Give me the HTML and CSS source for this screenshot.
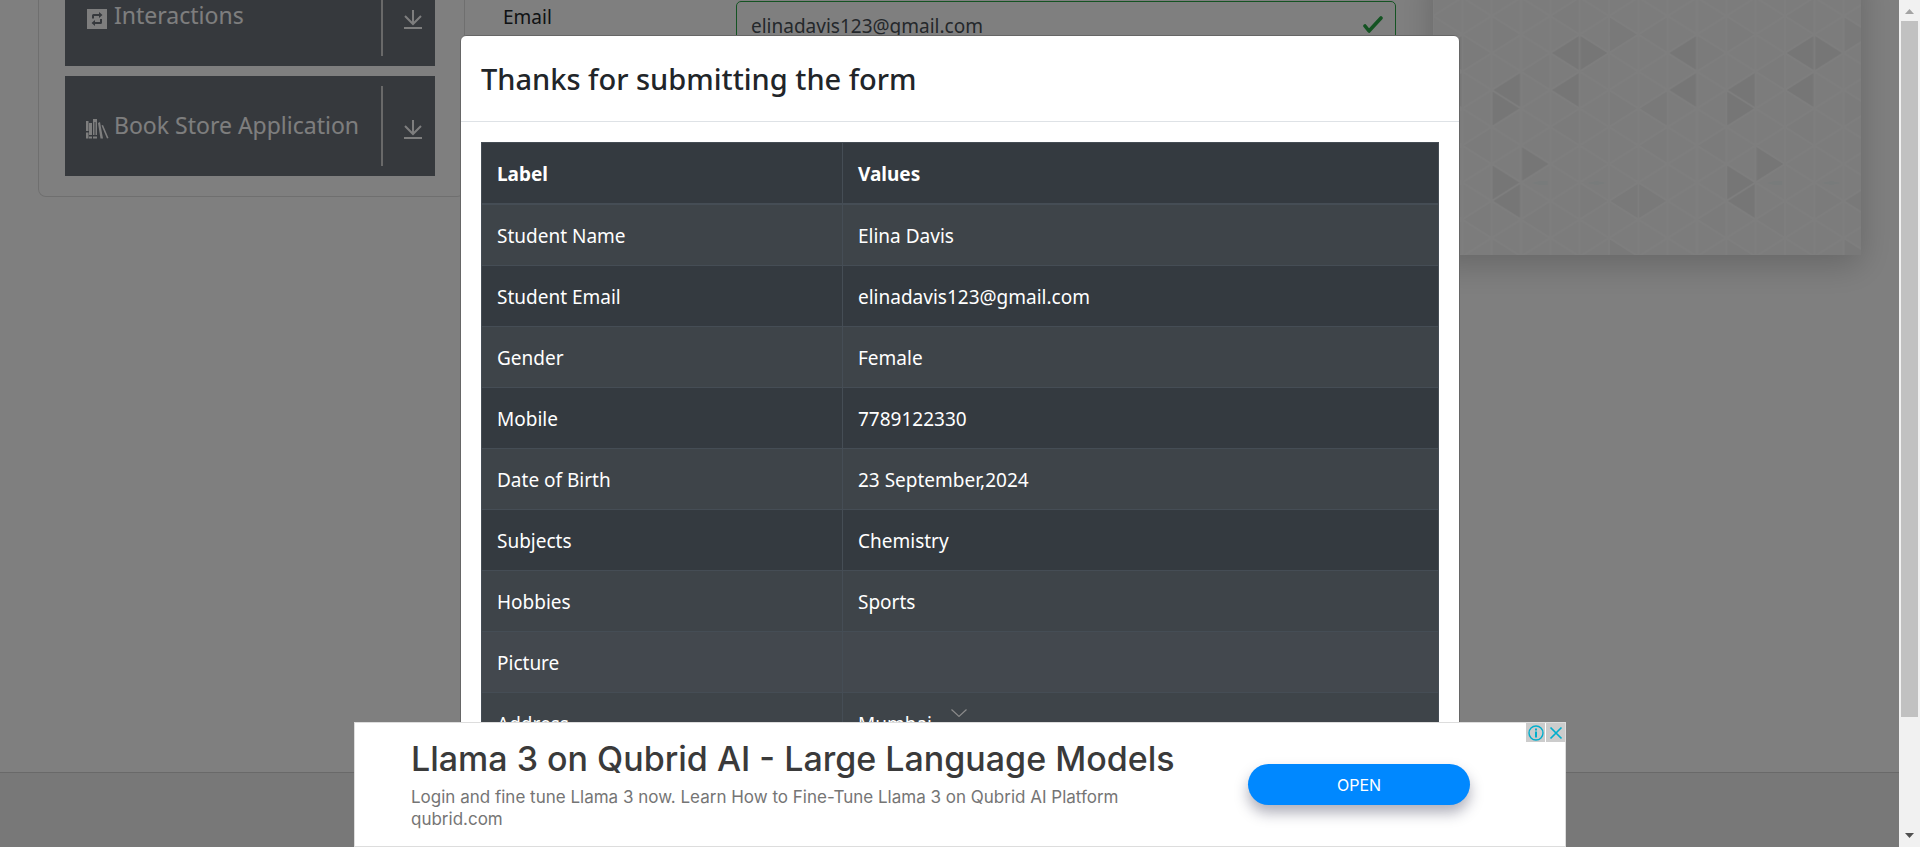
FILE: index.html
```html
<!DOCTYPE html>
<html lang="en">
<head>
<meta charset="utf-8">
<title>Student Registration Form</title>
<link rel="stylesheet" href="styles.css">
</head>
<body>
<div class="page">
  <div class="columns">
    <nav class="sidebar" aria-label="Sections">
      <a class="group" href="#interactions">
        <svg class="group-icon" viewBox="0 0 24 24" aria-hidden="true"><path fill="currentColor" fill-rule="evenodd" d="M1 2h20v20H1zM6 11V8.500Q6 7 7.500 7H13V5l3.500 3L13 11V9H8v2.500H6zM16 12v3.500q0 1.500-1.500 1.500H9v2l-3.500-3L9 13v2h5v-3z"/></svg>
        <span class="group-name">Interactions</span>
        <span class="group-toggle"><svg class="arrow" viewBox="0 0 18 20" aria-hidden="true"><path fill="none" stroke="currentColor" stroke-width="2" d="M9 0v14M1 6l8 8 8-8M0 18h18"/></svg></span>
      </a>
      <a class="group" href="#books">
        <svg class="group-icon" viewBox="0 0 24 24" aria-hidden="true"><path fill="currentColor" fill-rule="evenodd" d="M0 4h2.500v10H0zM0 15.500h2.500v6H0zM3 6h3v12H3zM3 19.500h3v2H3zM7 2h4v16H9.500V5h-1v13H7zM7 19.500h4v2H7zM12 6l2-1 3 16.500h-2.500zM15.500 8.500l1.500-.500 5.500 13-1.500.500z"/></svg>
        <span class="group-name">Book Store Application</span>
        <span class="group-toggle"><svg class="arrow" viewBox="0 0 18 20" aria-hidden="true"><path fill="none" stroke="currentColor" stroke-width="2" d="M9 0v14M1 6l8 8 8-8M0 18h18"/></svg></span>
      </a>
    </nav>
    <form class="form">
      <label class="form-label" for="email">Email</label>
      <div class="field">
        <input class="input" id="email" type="email" value="elinadavis123@gmail.com">
        <svg class="valid" viewBox="0 0 20 18" aria-hidden="true"><path fill="none" stroke="#28a745" stroke-width="3.600" stroke-linecap="round" stroke-linejoin="round" d="M2 10l4 5L18 2"/></svg>
      </div>
    </form>
    <aside class="banner">
      <svg class="banner-art" viewBox="0 0 428 289" preserveAspectRatio="xMinYMin slice" aria-hidden="true">
        <defs>
          <pattern id="mesh" width="58.660" height="37" patternUnits="userSpaceOnUse" x="58.670" y="50">
            <path d="M0 0V37M29.330 0V37M58.660 0V37M0 0L58.660 37M0 37L58.660 0" fill="none" stroke="#fdfdfd" stroke-width="1.800"/>
          </pattern>
          <g id="tiles">
            <path fill="#ededed" d="M58.660 53L88 34.500 117.330 53 88 71.500zM0 90L29.330 71.500v37zM58.660 90L88 71.500v37zM0 90v37l29.330-18.500zM176 53l29.330-18.500v37zM176 90l29.330-18.500v37zM29.330 145.500v37L58.660 164zM0 164v37l29.330-18.500zM0 201l29.330-18.500v37z"/>
            <path fill="#f2f2f2" d="M117.330 16v37l29.330-18.500zM146.660 108.500L176 90v37zM117.330 201l29.330-18.500L176 201l-29.330 18.500zM117.330 238v37l29.330-18.500z"/>
            <path fill="#f6f6f6" d="M146.660 34.500L176 16v37zM146.660 145.500L176 127v37zM205.330 145.500L234.660 127v37zM0 16v37l29.330-18.500zM58.660 16L88-2.500v37zM29.330 71.500L58.660 53v37zM117.330 90v37l29.330-18.500zM58.660 127L88 108.500v37zM88 182.500v37l29.330-18.500zM29.330 219.500L58.660 201v37zM205.330 219.500L234.660 201v37zM0 238v37l29.330-18.500zM205.330 34.500v37L234.660 53z"/>
            <path fill="#f0f6f6" d="M40 183l8-2h8v4h-8zM95 183l10-2 10 2-10 2z"/>
          </g>
        </defs>
        <path fill="#f9f9f9" d="M0 0h428v289H0z"/>
        <use href="#tiles" x="-176" y="34"/>
        <use href="#tiles" x="58.670" y="34"/>
        <use href="#tiles" x="293.330" y="34"/>
        <path fill="url(#mesh)" d="M0 0h428v289H0z"/>
      </svg>
    </aside>
  </div>
  <footer class="footer"></footer>
  <div class="backdrop"></div>
</div>

<div class="modal-layer">
  <section class="modal" role="dialog" aria-labelledby="modal-title">
    <header class="modal-header"><h1 class="modal-title" id="modal-title">Thanks for submitting the form</h1></header>
    <div class="modal-body">
      <table class="table">
        <thead><tr><th class="label-col">Label</th><th>Values</th></tr></thead>
        <tbody>
          <tr><td>Student Name</td><td>Elina Davis</td></tr>
          <tr><td>Student Email</td><td>elinadavis123@gmail.com</td></tr>
          <tr><td>Gender</td><td>Female</td></tr>
          <tr><td>Mobile</td><td>7789122330</td></tr>
          <tr><td>Date of Birth</td><td>23 September,2024</td></tr>
          <tr><td>Subjects</td><td>Chemistry</td></tr>
          <tr><td>Hobbies</td><td>Sports</td></tr>
          <tr class="hovered"><td>Picture</td><td></td></tr>
          <tr><td>Address</td><td>Mumbai</td></tr>
        </tbody>
      </table>
    </div>
  </section>
</div>

<div class="ad-layer">
  <button class="collapse" type="button" aria-label="Collapse ad"><svg class="chevron" viewBox="0 0 16 8" aria-hidden="true"><path fill="none" stroke="#8b8b8b" stroke-width="1.200" d="M.5.5L8 7.400 15.500.5"/></svg></button>
  <section class="ad" aria-label="Advertisement">
    <div class="ad-copy">
      <h2 class="ad-title">Llama 3 on Qubrid AI - Large Language Models</h2>
      <p class="ad-text">Login and fine tune Llama 3 now. Learn How to Fine-Tune Llama 3 on Qubrid AI Platform</p>
      <p class="ad-text">qubrid.com</p>
    </div>
    <button class="open" type="button">OPEN</button>
    <div class="ad-tools">
      <button class="ad-tool" type="button" aria-label="Ad information"><svg class="tool-icon" viewBox="0 0 18 18" aria-hidden="true"><circle cx="9" cy="9" r="7" fill="none" stroke="#00aecd" stroke-width="1.400"/><path fill="#00aecd" d="M8 4.500h2v2H8zM8 7.500h2v6H8z"/></svg></button>
      <button class="ad-tool" type="button" aria-label="Close ad"><svg class="tool-icon" viewBox="0 0 18 18" aria-hidden="true"><path fill="none" stroke="#00aecd" stroke-width="1.700" d="M3.500 3.500l11 11M14.500 3.500l-11 11"/></svg></button>
    </div>
  </section>
</div>

<div class="scrollbar" aria-hidden="true">
  <svg class="scroll-arrow" viewBox="0 0 21 21"><path fill="#a3a3a3" d="M6 14l4.500-5 4.500 5z"/></svg>
  <div class="track"><div class="thumb"></div></div>
  <svg class="scroll-arrow" viewBox="0 0 21 21"><path fill="#505050" d="M6 7l4.500 5L15 7z"/></svg>
</div>
</body>
</html>
```
FILE: styles.css
```css
* { box-sizing: border-box; }
body {
  margin: 0;
  height: 100vh;
  overflow: hidden;
  position: relative;
  font-family: "Noto Sans", "Open Sans", sans-serif;
  font-size: 19px;
  line-height: 30px;
  color: #212529;
  background: #fff;
}
.page {
  height: 100vh;
  padding-right: 21px;
  display: flex;
  flex-direction: column;
  overflow: hidden;
}
/* the page is scrolled down part of a row */
.columns {
  flex: 1;
  margin-top: -34px;
  padding: 0 38px;
  display: grid;
  grid-template-columns: 427fr 968fr 428fr;
  align-items: start;
}
.sidebar {
  padding: 0 29px 20px 26px;
  border: 1px solid #dfdfdf;
  border-top: 0;
  border-radius: 0 0 8px 8px;
  display: grid;
  gap: 10px;
}
.group {
  height: 100px;
  padding: 10px 0 10px 21px;
  display: flex;
  align-items: center;
  background: #6c727b;
  color: #fdfdfd;
  text-decoration: none;
  font-size: 23px;
}
.group-icon { width: 24px; height: 24px; margin: 6px 4px 0 0; }
.group-name { flex: 1; padding-bottom: 2px; white-space: nowrap; }
.group-toggle {
  width: 54px;
  height: 80px;
  border-left: 2px solid #d2d2d2;
  display: flex;
  align-items: center;
  justify-content: center;
}
.arrow { width: 18px; height: 20px; margin: 7px 0 0 8px; }
.form {
  padding: 35px 37px 0 38px;
  display: flex;
}
.form-label { width: 233px; padding-top: 1px; }
.field { flex: 1; position: relative; }
.input {
  width: 100%;
  height: 48px;
  padding: 2px 50px 0 14px;
  border: 1px solid #28a745;
  border-radius: 5px;
  background: transparent;
  color: #495057;
  font: inherit;
}
.valid { position: absolute; right: 13px; top: 15px; width: 20px; height: 18px; }
.banner { box-shadow: 0 10px 32px rgba(0, 0, 0, .2); }
.banner-art { display: block; width: 100%; }
.footer {
  height: 75px;
  border-top: 1px solid #d3d3d3;
  background: #f1f1f1;
}
.backdrop { position: absolute; inset: 0; background: rgba(0, 0, 0, .5); }
.modal-layer {
  position: absolute;
  inset: 0;
  padding-top: 35px;
  overflow: hidden;
}
.modal {
  max-width: 1000px;
  margin: 0 auto;
  border: 1px solid #666;
  border-radius: 6px;
  background: #fff;
}
.modal-header { padding: 20px; border-bottom: 1px solid #dee2e6; }
.modal-title { margin: 0; font-size: 29px; line-height: 45px; font-weight: 500; }
.modal-body { padding: 20px 20px 100px; }
.table {
  width: 100%;
  border-collapse: collapse;
  table-layout: fixed;
  background: #343a40;
  color: #fff;
}
.table th, .table td {
  height: 61px;
  padding: 16px 15px 14px;
  border: 1px solid #454d55;
  text-align: left;
}
.table th { border-bottom-width: 2px; font-weight: 700; }
.label-col { width: 361px; }
.table tbody tr:nth-child(odd) { background: #3e4449; }
.table tbody .hovered { background: #43484e; }
.ad-layer {
  position: absolute;
  left: 0;
  right: 0;
  bottom: 0;
  display: flex;
  flex-direction: column;
  align-items: center;
}
.collapse { padding: 0 2px 5px 0; border: 0; background: none; display: flex; }
.chevron { width: 16px; height: 8px; }
.ad {
  position: relative;
  width: 100%;
  max-width: 1212px;
  height: 125px;
  padding: 13px 95px 0 56px;
  border: 1px solid #ddd;
  background: #fff;
  display: flex;
  align-items: flex-start;
  justify-content: space-between;
  font-family: Inter, Lato, sans-serif;
}
.ad-title { margin: 0 0 4px; font-size: 34px; line-height: 46px; font-weight: 500; color: #3a3a3a; }
.ad-text { margin: 0; font-size: 17px; line-height: 22px; font-weight: 400; color: #757575; }
.open {
  width: 222px;
  height: 41px;
  margin-top: 28px;
  border: 0;
  border-radius: 21px;
  background: #08f;
  color: #fff;
  font: 16px Inter, sans-serif;
  box-shadow: 0 8px 14px rgba(30, 30, 60, .35);
}
.ad-tools { position: absolute; top: 0; right: 0; display: flex; gap: 1px; }
.ad-tool { padding: 0; width: 19px; height: 19px; border: 0; background: #ccc; display: grid; place-items: center; }
.tool-icon { width: 18px; height: 18px; }
.scrollbar {
  position: absolute;
  top: 0;
  right: 0;
  bottom: 0;
  width: 21px;
  background: #f1f1f1;
  display: flex;
  flex-direction: column;
}
.scroll-arrow { width: 21px; height: 21px; }
.track { flex: 1; padding: 0 2px; }
.thumb { height: 86.5%; background: #c1c1c1; }
```
